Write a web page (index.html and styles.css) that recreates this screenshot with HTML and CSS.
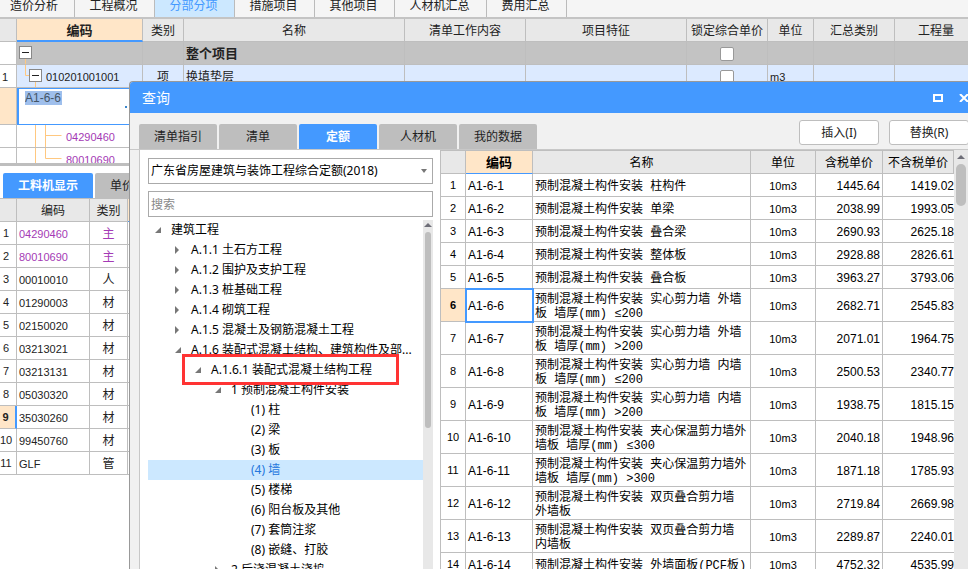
FILE: index.html
```html
<!DOCTYPE html>
<html lang="zh-CN">
<head>
<meta charset="utf-8">
<title>分部分项</title>
<link rel="stylesheet" href="styles.css">
</head>
<body>
<div class="app">
  <nav class="top-tabs">
    <a href="#" class="first">造价分析</a><a href="#">工程概况</a><a href="#" class="active">分部分项</a><a href="#">措施项目</a><a href="#">其他项目</a><a href="#" class="wide">人材机汇总</a><a href="#">费用汇总</a>
  </nav>

  <div class="main-pane">
    <table class="grid main-grid">
      <colgroup><col class="m-num"><col class="m-code"><col class="m-kind"><col class="m-name"><col class="m-work"><col><col class="m-lock"><col class="m-unit"><col class="m-sum"><col class="m-qty"></colgroup>
      <thead><tr><th></th><th class="current">编码</th><th>类别</th><th>名称</th><th>清单工作内容</th><th>项目特征</th><th>锁定综合单价</th><th>单位</th><th>汇总类别</th><th>工程量</th></tr></thead>
      <tbody>
        <tr class="group"><td class="num"></td>
          <td class="tree-cell"><svg width="60" height="22"><rect x="2.500" y="4.500" width="12" height="12" fill="#fff" stroke="#888"/><path d="M5 10.500h7" stroke="#222"/><path d="M8.500 17v5" stroke="#ffc880"/></svg></td>
          <td></td><td class="title">整个项目</td><td></td><td></td><td class="center"><input type="checkbox" aria-label="锁定整个项目"></td><td></td><td></td><td></td></tr>
        <tr class="item"><td class="num">1</td>
          <td class="tree-cell"><div><svg width="29" height="22"><path d="M8.500 0v10.500h4M18.500 17v5" fill="none" stroke="#ffc880"/><rect x="12.500" y="4.500" width="12" height="12" fill="#fff" stroke="#888"/><path d="M15 10.500h7" stroke="#222"/></svg><span>010201001001</span></div></td>
          <td class="center">项</td><td>换填垫层</td><td></td><td></td><td class="center"><input type="checkbox" aria-label="锁定换填垫层"></td><td class="small">m3</td><td></td><td></td></tr>
        <tr class="edit"><td class="num"></td><td class="editing"><input type="text" aria-label="编码" value="A1-6-6"><button type="button" aria-label="选择"></button></td><td></td><td></td><td></td><td></td><td></td><td></td><td></td><td></td></tr>
        <tr class="leaf"><td class="num"></td><td class="tree-cell"><div><svg width="49" height="22"><path d="M18.500 0v22M28.500 0v22M28.500 10.500h16" fill="none" stroke="#ffc880"/></svg><span>04290460</span></div></td><td></td><td></td><td></td><td></td><td></td><td></td><td></td><td></td></tr>
        <tr class="leaf"><td class="num"></td><td class="tree-cell"><div><svg width="49" height="22"><path d="M18.500 0v22M28.500 0v10.500h16" fill="none" stroke="#ffc880"/></svg><span>80010690</span></div></td><td></td><td></td><td></td><td></td><td></td><td></td><td></td><td></td></tr>
      </tbody>
    </table>
  </div>

  <div class="detail-pane">
    <nav class="detail-tabs"><a href="#" class="active">工料机显示</a><a href="#" class="start">单价构成</a></nav>
    <table class="grid detail-grid">
      <colgroup><col class="d-num"><col class="d-code"><col class="d-kind"><col></colgroup>
      <thead><tr><th></th><th>编码</th><th>类别</th><th class="current"></th></tr></thead>
      <tbody>
        <tr class="main-item"><td>1</td><td>04290460</td><td>主</td><td></td></tr>
        <tr class="main-item"><td>2</td><td>80010690</td><td>主</td><td></td></tr>
        <tr><td>3</td><td>00010010</td><td>人</td><td></td></tr>
        <tr><td>4</td><td>01290003</td><td>材</td><td></td></tr>
        <tr><td>5</td><td>02150020</td><td>材</td><td></td></tr>
        <tr><td>6</td><td>03213021</td><td>材</td><td></td></tr>
        <tr><td>7</td><td>03213131</td><td>材</td><td></td></tr>
        <tr><td>8</td><td>05030320</td><td>材</td><td></td></tr>
        <tr class="current"><td>9</td><td>35030260</td><td>材</td><td></td></tr>
        <tr><td>10</td><td>99450760</td><td>材</td><td></td></tr>
        <tr><td>11</td><td>GLF</td><td>管</td><td></td></tr>
      </tbody>
    </table>
  </div>

  <section class="dialog" role="dialog" aria-labelledby="dialog-title">
    <header class="title-bar">
      <h1 id="dialog-title">查询</h1>
      <button type="button" aria-label="最大化"><svg width="10" height="8"><rect x="1" y="1" width="8" height="6" fill="none" stroke="#fff" stroke-width="2"/></svg></button>
      <button type="button" class="close" aria-label="关闭"><svg width="10" height="8"><path d="M1 0l8 8M9 0L1 8" stroke="#fff" stroke-width="2"/></svg></button>
    </header>
    <div class="toolbar">
      <nav class="dialog-tabs"><a href="#">清单指引</a><a href="#">清单</a><a href="#" class="active">定额</a><a href="#">人材机</a><a href="#">我的数据</a></nav>
      <div class="actions"><button type="button">插入(I)</button><button type="button">替换(R)</button></div>
    </div>
    <div class="content">
      <div class="browser">
        <div class="select-box">
          <select aria-label="定额库"><option>广东省房屋建筑与装饰工程综合定额(2018)</option></select>
          <svg width="6" height="4"><path d="M0 0h6L3 4z" fill="#777"/></svg>
        </div>
        <input class="search" type="text" placeholder="搜索" aria-label="搜索">
        <div class="tree-area">
          <ul class="tree">
            <li class="l0"><svg width="8" height="8"><path d="M7 1v6H1z" fill="#777"/></svg><span>建筑工程</span></li>
            <li class="l1"><svg width="8" height="8"><path d="M1 0v8l4-4z" fill="#777"/></svg><span>A.1.1 土石方工程</span></li>
            <li class="l1"><svg width="8" height="8"><path d="M1 0v8l4-4z" fill="#777"/></svg><span>A.1.2 围护及支护工程</span></li>
            <li class="l1"><svg width="8" height="8"><path d="M1 0v8l4-4z" fill="#777"/></svg><span>A.1.3 桩基础工程</span></li>
            <li class="l1"><svg width="8" height="8"><path d="M1 0v8l4-4z" fill="#777"/></svg><span>A.1.4 砌筑工程</span></li>
            <li class="l1"><svg width="8" height="8"><path d="M1 0v8l4-4z" fill="#777"/></svg><span>A.1.5 混凝土及钢筋混凝土工程</span></li>
            <li class="l1"><svg width="8" height="8"><path d="M7 1v6H1z" fill="#777"/></svg><span>A.1.6 装配式混凝土结构、建筑构件及部...</span></li>
            <li class="l2 marked"><svg width="8" height="8"><path d="M7 1v6H1z" fill="#777"/></svg><span>A.1.6.1 装配式混凝土结构工程</span></li>
            <li class="l3"><svg width="8" height="8"><path d="M7 1v6H1z" fill="#777"/></svg><span>1 预制混凝土构件安装</span></li>
            <li class="l4"><span>(1) 柱</span></li>
            <li class="l4"><span>(2) 梁</span></li>
            <li class="l4"><span>(3) 板</span></li>
            <li class="l4 selected"><span>(4) 墙</span></li>
            <li class="l4"><span>(5) 楼梯</span></li>
            <li class="l4"><span>(6) 阳台板及其他</span></li>
            <li class="l4"><span>(7) 套筒注浆</span></li>
            <li class="l4"><span>(8) 嵌缝、打胶</span></li>
            <li class="l3"><svg width="8" height="8"><path d="M1 0v8l4-4z" fill="#777"/></svg><span>2 后浇混凝土浇捣</span></li>
          </ul>
          <div class="scrollbar tree-scroll"><svg width="8" height="4"><path d="M0 4h8L4 0z" fill="#6e6e78"/></svg><i></i></div>
        </div>
      </div>
      <div class="quota">
        <table class="grid quota-grid">
          <colgroup><col class="q-num"><col class="q-code"><col><col class="q-unit"><col class="q-tax"><col class="q-net"></colgroup>
          <thead><tr><th></th><th class="current">编码</th><th>名称</th><th>单位</th><th>含税单价</th><th>不含税单价</th></tr></thead>
          <tbody>
            <tr><td>1</td><td>A1-6-1</td><td>预制混凝土构件安装 柱构件</td><td>10m3</td><td>1445.64</td><td>1419.02</td></tr>
            <tr><td>2</td><td>A1-6-2</td><td>预制混凝土构件安装 单梁</td><td>10m3</td><td>2038.99</td><td>1993.05</td></tr>
            <tr><td>3</td><td>A1-6-3</td><td>预制混凝土构件安装 叠合梁</td><td>10m3</td><td>2690.93</td><td>2625.18</td></tr>
            <tr><td>4</td><td>A1-6-4</td><td>预制混凝土构件安装 整体板</td><td>10m3</td><td>2928.88</td><td>2826.61</td></tr>
            <tr><td>5</td><td>A1-6-5</td><td>预制混凝土构件安装 叠合板</td><td>10m3</td><td>3963.27</td><td>3793.06</td></tr>
            <tr class="tall current"><td>6</td><td>A1-6-6</td><td>预制混凝土构件安装 实心剪力墙 外墙<br>板 墙厚(mm) ≤200</td><td>10m3</td><td>2682.71</td><td>2545.83</td></tr>
            <tr class="tall"><td>7</td><td>A1-6-7</td><td>预制混凝土构件安装 实心剪力墙 外墙<br>板 墙厚(mm) &gt;200</td><td>10m3</td><td>2071.01</td><td>1964.75</td></tr>
            <tr class="tall"><td>8</td><td>A1-6-8</td><td>预制混凝土构件安装 实心剪力墙 内墙<br>板 墙厚(mm) ≤200</td><td>10m3</td><td>2500.53</td><td>2340.77</td></tr>
            <tr class="tall"><td>9</td><td>A1-6-9</td><td>预制混凝土构件安装 实心剪力墙 内墙<br>板 墙厚(mm) &gt;200</td><td>10m3</td><td>1938.75</td><td>1815.15</td></tr>
            <tr class="tall"><td>10</td><td>A1-6-10</td><td>预制混凝土构件安装 夹心保温剪力墙外<br>墙板 墙厚(mm) ≤300</td><td>10m3</td><td>2040.18</td><td>1948.96</td></tr>
            <tr class="tall"><td>11</td><td>A1-6-11</td><td>预制混凝土构件安装 夹心保温剪力墙外<br>墙板 墙厚(mm) &gt;300</td><td>10m3</td><td>1871.18</td><td>1785.93</td></tr>
            <tr class="tall"><td>12</td><td>A1-6-12</td><td>预制混凝土构件安装 双页叠合剪力墙<br>外墙板</td><td>10m3</td><td>2719.84</td><td>2669.98</td></tr>
            <tr class="tall"><td>13</td><td>A1-6-13</td><td>预制混凝土构件安装 双页叠合剪力墙<br>内墙板</td><td>10m3</td><td>2289.87</td><td>2240.01</td></tr>
            <tr><td>14</td><td>A1-6-14</td><td>预制混凝土构件安装 外墙面板(PCF板)</td><td>10m3</td><td>4752.32</td><td>4535.99</td></tr>
          </tbody>
        </table>
        <div class="scrollbar quota-scroll"><svg width="8" height="4"><path d="M0 4h8L4 0z" fill="#6e6e78"/></svg><i></i></div>
      </div>
    </div>
  </section>
</div>
</body>
</html>
```
FILE: styles.css
```css
*, *::after { box-sizing: border-box; }
body {
  margin: 0;
  font: 12px/14px "Liberation Sans", "Noto Sans CJK SC", sans-serif;
  color: #222;
  background: #fff;
}
a { color: inherit; text-decoration: none; }
button, input, select { font: inherit; color: inherit; margin: 0; padding: 0; }
svg { display: block; flex: none; }

.app {
  position: relative;
  display: flex;
  flex-direction: column;
  height: 100vh;
  overflow: hidden;
}

/* top tabs */
.top-tabs { display: flex; flex: none; height: 17px; background: #f5f5f5; line-height: 12px; }
.top-tabs a { width: 80px; padding-right: 2px; text-align: center; border-right: 1px solid #bbb; }
.top-tabs .first { width: 75px; padding-right: 6px; }
.top-tabs .wide { width: 92px; }
.top-tabs .active { background: #cce8ff; color: #49f; }

/* shared grid */
.grid { width: 100%; table-layout: fixed; border-collapse: separate; border-spacing: 0; }
.grid th, .grid td {
  height: 23px;
  padding: 2px 2px 0;
  border: 0 solid #bebebe;
  border-width: 0 1px 1px 0;
  overflow: hidden;
  white-space: nowrap;
}
.grid th { background: #e8e8e8; font-weight: normal; text-align: center; }
.grid th.current { background: #ffe6c8; border-bottom-color: #49f; }

/* bill of quantities */
.main-pane { flex: none; height: 149px; overflow: hidden; border-top: 2px solid #c4c4c4; border-bottom: 3px solid #bebebe; }
.main-grid { width: calc(100% + 10px); }
.m-num { width: 17px; }
.m-code { width: 126px; }
.m-kind { width: 41px; }
.m-name { width: 221px; }
.m-work { width: 121px; }
.m-lock { width: 81px; }
.m-unit { width: 46px; }
.m-sum { width: 81px; }
.m-qty { width: 83px; }
.main-grid th.current { font-size: 13px; font-weight: bold; border-bottom-width: 2px; }
.main-grid .num { background: #fff; font-size: 11px; }
.main-grid .tree-cell { padding: 0; font-size: 11px; }
.tree-cell div { display: flex; align-items: center; height: 22px; }
.tree-cell span { padding-top: 2px; }
.main-grid .center { text-align: center; }
.main-grid .small { font-size: 11px; }
.group td { background: #c3c3c3; }
.group .title { font-size: 13px; font-weight: bold; }
.item td { background: #dceaff; }
.leaf .tree-cell span { color: #a43ab5; }
.main-grid .edit td { height: 37px; }
.main-grid .edit .num { background: #ffe6c8; }
.main-grid .edit .editing { position: relative; padding: 2px 0 0 6px; border: 2px solid #49f; border-width: 1px 0 1px 2px; vertical-align: top; }
.editing input { display: block; width: 37px; height: 14px; border: 0; background: #9fbfec; color: #456; font-size: 12px; }
.editing button { position: absolute; right: 16px; top: 17px; width: 2px; height: 2px; border: 0; background: #3a87cc; }
input[type="checkbox"] {
  appearance: none;
  display: block;
  width: 14px;
  height: 14px;
  margin: 0 auto;
  border: 1px solid #999;
  border-radius: 2px;
  background: #fff;
}

/* resource detail */
.detail-pane { flex: 1; overflow: hidden; padding-top: 7px; }
.detail-tabs { display: flex; gap: 2px; height: 25px; padding-left: 3px; }
.detail-tabs a { width: 90px; border-radius: 2px 2px 0 0; background: #bebebe; line-height: 26px; text-align: center; }
.detail-tabs .start { padding-left: 15px; text-align: left; }
.detail-tabs .active { background: #49f; color: #fff; font-weight: bold; }
.detail-grid { width: 200px; border-top: 1px solid #bebebe; }
.d-num { width: 17px; }
.d-code { width: 73px; }
.d-kind { width: 38px; }
.detail-grid td { font-size: 11px; }
.detail-grid td:nth-child(1) { padding: 0 4px 0 0; text-align: center; }
.detail-grid td:nth-child(3) { font-size: 12px; text-align: center; }
.detail-grid .main-item td:not(:first-child) { color: #a43ab5; }
.detail-grid .current td:first-child { background: #ffe6c8; border-right: 2px solid #49f; font-weight: bold; }

/* query dialog */
.dialog {
  position: absolute;
  left: 129px;
  right: 0;
  top: 81px;
  bottom: 0;
  display: flex;
  flex-direction: column;
  overflow: hidden;
  border: 1px solid #999;
  border-width: 1px 0 0 1px;
  border-radius: 4px 0 0 0;
  background: #f1f1f1;
  font-family: "Noto Sans", "Noto Sans CJK SC", sans-serif;
}
.title-bar { display: flex; flex: none; align-items: center; height: 31px; padding-left: 12px; background: #49f; color: #fff; }
.title-bar h1 { flex: 1; margin: 0; font-size: 14px; font-weight: normal; line-height: 20px; }
.title-bar button { border: 0; background: none; }
.title-bar .close { margin: 0 -1px 0 16px; }
.toolbar { display: flex; flex: none; justify-content: space-between; height: 37px; padding: 7px 0 0 9px; border-bottom: 1px solid #c8c8c8; }
.dialog-tabs { display: flex; gap: 2px; margin-top: 4px; }
.dialog-tabs a { width: 78px; border-radius: 2px 2px 0 0; background: #bebebe; line-height: 26px; text-align: center; }
.dialog-tabs .active { background: #49f; color: #fff; font-weight: bold; }
.actions { display: flex; gap: 10px; margin-right: -1px; }
.actions button { width: 80px; height: 25px; border: 1px solid #bebebe; border-radius: 3px; background: #fff; }
.content { display: flex; flex: 1; min-height: 0; margin-left: 9px; border-left: 1px solid #c8c8c8; background: #fff; }
.browser { display: flex; flex: none; flex-direction: column; width: 300px; padding: 8px 7px 0 8px; color: #000; }
.select-box { display: flex; flex: none; align-items: center; height: 26px; padding-right: 5px; border: 1px solid #aaa; }
.select-box select { appearance: none; flex: 1; height: 24px; padding-left: 2px; border: 0; background: #fff; }
.search { flex: none; height: 26px; margin-top: 7px; padding-left: 2px; border: 1px solid #aaa; background: #fff; }
.search::placeholder { color: #888; }
.tree-area { display: flex; flex: 1; min-height: 0; margin-top: 3px; }
.tree { flex: 1; margin: 0; padding: 0; list-style: none; overflow: hidden; }
.tree li { position: relative; display: flex; align-items: center; gap: 9px; height: 20px; line-height: 20px; white-space: nowrap; }
.tree .l0 { padding-left: 6px; }
.tree .l1 { padding-left: 26px; }
.tree .l2 { padding-left: 46px; }
.tree .l3 { padding-left: 66px; }
.tree .l4 { padding-left: 103px; }
.tree .selected { background: #cce8ff; color: #2477dd; }
.tree .marked { z-index: 1; }
.marked::after { content: ""; position: absolute; left: 34px; top: -6px; width: 217px; height: 31px; border: 3px solid #f33; }
.scrollbar { flex: none; background: #e8e8e8; }
.scrollbar i { display: block; border-radius: 5px; background: #bebebe; }
.tree-scroll { width: 10px; padding: 3px 1px 0; }
.tree-scroll i { width: 6px; height: 196px; margin: 5px 1px 0; }
.quota { display: flex; flex: 1; min-width: 0; border-left: 1px solid #bebebe; overflow: hidden; }
.quota-grid { flex: 1; width: 0; align-self: flex-start; border-top: 1px solid #bebebe; font-family: "Liberation Sans", "Noto Sans CJK SC", sans-serif; color: #000; }
.q-num { width: 25px; }
.q-code { width: 67px; }
.q-unit { width: 65px; }
.q-tax { width: 67px; }
.q-net { width: 71px; }
.quota-grid td { line-height: 14px; }
.quota-grid .tall td { height: 33px; }
.quota-grid th.current { font-size: 13px; font-weight: bold; }
.quota-grid td:nth-child(1) { font-size: 11px; text-align: center; padding-top: 0; }
.quota-grid td:nth-child(3) { padding-top: 3px; font-family: "Liberation Mono", "Noto Sans CJK SC", monospace; }
.quota-grid td:nth-child(4) { text-align: center; font-size: 11px; }
.quota-grid td:nth-child(5) { text-align: right; }
.quota-grid td:nth-child(6) { padding: 2px 0 0; border-right: 0; text-align: right; }
.quota-grid .current td:nth-child(1) { background: #ffe6c8; font-weight: bold; }
.quota-grid .current td:nth-child(2) { outline: 2px solid #49f; outline-offset: -1px; }
.quota-scroll { width: 14px; padding: 5px 2px 0; }
.quota-scroll svg { margin-left: 1px; }
.quota-scroll i { height: 42px; margin-top: 5px; }
```
